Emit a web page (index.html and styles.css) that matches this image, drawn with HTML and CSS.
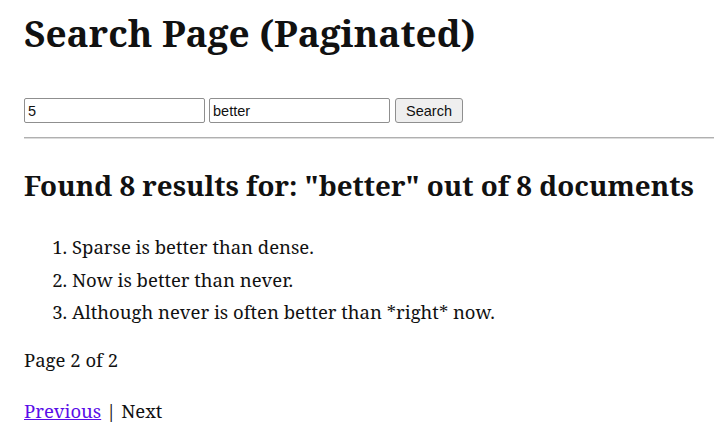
FILE: index.html
```html
<!DOCTYPE html>
<html>
<head>
<meta charset="utf-8">
<link rel="stylesheet" href="styles.css">
<title>Search Page (Paginated)</title>
</head>
<body>
<div class="page">
<h1 class="title">Search Page (Paginated)</h1>
<form class="search">
<input class="field" type="text" name="n" value="5">
<input class="field" type="text" name="q" value="better">
<button class="btn" type="submit">Search</button>
</form>
<hr class="rule">
<h2 class="summary">Found 8 results for: "better" out of 8 documents</h2>
<ol class="results">
<li>Sparse is better than dense.</li>
<li>Now is better than never.</li>
<li>Although never is often better than *right* now.</li>
</ol>
<p class="pageinfo">Page 2 of 2</p>
<p class="pager"><a href="#">Previous</a> | Next</p>
</div>
</body>
</html>
```
FILE: styles.css
```css
html, body {
  margin: 0;
  padding: 0;
  background: #fff;
}
body {
  font-family: "Noto Serif", "DejaVu Serif", serif;
  font-size: 18.5px;
  color: #111;
}
.page {
  padding: 0 10px 0 24px;
}
.title {
  font-size: 37px;
  line-height: 48px;
  margin: 9px 0 0;
  font-weight: 700;
  white-space: nowrap;
}
.search {
  margin: 41px 0 0;
  display: flex;
  gap: 4px;
  align-items: center;
}
.field {
  box-sizing: border-box;
  width: 181px;
  height: 25px;
  margin: 0;
  padding: 1px 3px;
  font-family: "Liberation Sans", Arial, sans-serif;
  font-size: 14.5px;
  border: 1px solid #8f8f8f;
  border-radius: 2px;
  color: #111;
}
.btn {
  box-sizing: border-box;
  width: 68px;
  height: 25px;
  margin: 0 0 0 1px;
  padding: 0 6px;
  font-family: "Liberation Sans", Arial, sans-serif;
  font-size: 14.5px;
  color: #111;
  background: #efefef;
  border: 1px solid #8f8f8f;
  border-radius: 3px;
}
.rule {
  margin: 14px 0 0;
  border: 0;
  border-top: 1px solid #b0b0b0;
  border-bottom: 1px solid #dcdcdc;
}
.summary {
  font-size: 27.75px;
  line-height: 40px;
  margin: 26px 0 0;
  font-weight: 700;
  white-space: nowrap;
}
.results {
  margin: 26px 0 0;
  padding-left: 48px;
}
.results li {
  line-height: 32.5px;
}
.pageinfo {
  margin: 15px 0 0;
  line-height: 32px;
}
.pager {
  margin: 19px 0 0;
  line-height: 32px;
}
.pager a {
  color: #5a0de8;
}
```
